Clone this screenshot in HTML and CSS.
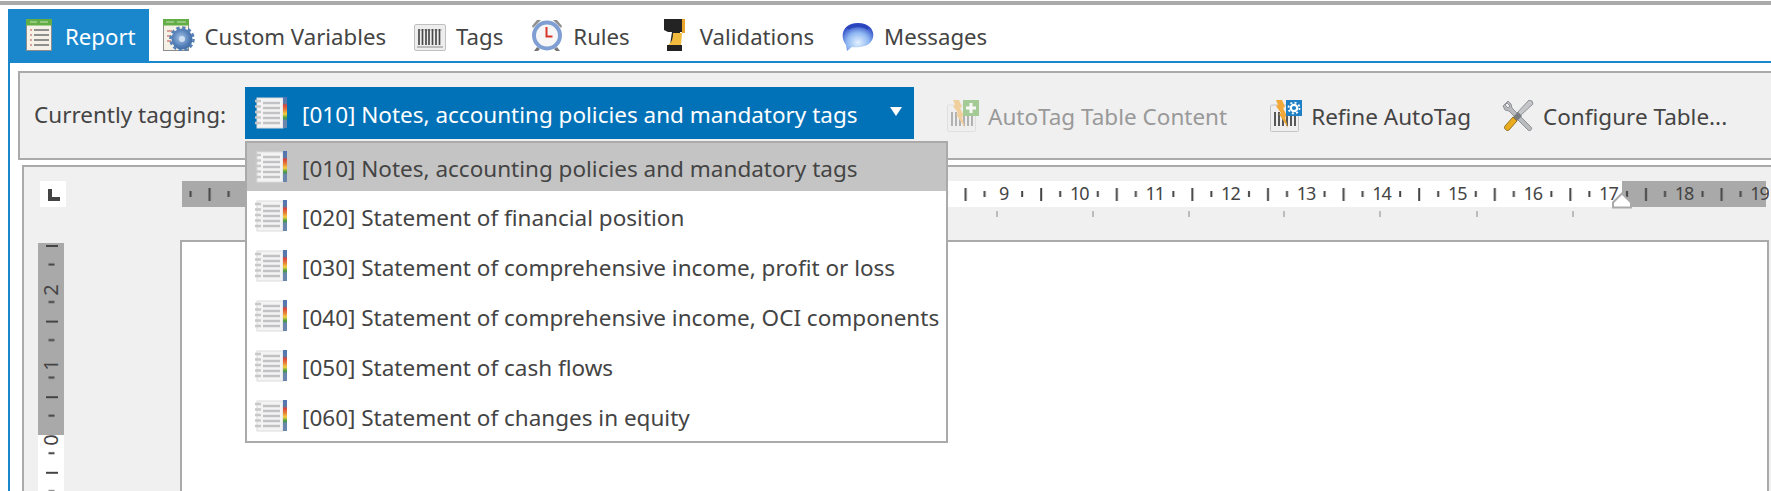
FILE: index.html
```html
<!DOCTYPE html>
<html lang="en">
<head>
<meta charset="utf-8">
<title>Report</title>
<link rel="stylesheet" href="styles.css">
</head>
<body>
<svg class="defs" width="0" height="0" aria-hidden="true">
  <defs>
    <radialGradient id="gearFill" cx="45%" cy="45%" r="60%">
      <stop offset="0" stop-color="#a9c4e6"/><stop offset=".6" stop-color="#5b86bd"/><stop offset="1" stop-color="#3a659c"/>
    </radialGradient>
    <radialGradient id="bubbleFill" cx="50%" cy="70%" r="65%">
      <stop offset="0" stop-color="#e4f1ff"/><stop offset=".55" stop-color="#8fb8f2"/><stop offset="1" stop-color="#2c48c4"/>
    </radialGradient>
    <linearGradient id="stripFill" x1="0" y1="0" x2="0" y2="1">
      <stop offset="0" stop-color="#4f76b4"/><stop offset=".2" stop-color="#5a79a8"/><stop offset=".27" stop-color="#d8443a"/><stop offset=".42" stop-color="#e8803a"/><stop offset=".55" stop-color="#f2cf3f"/><stop offset=".68" stop-color="#3f9a3f"/><stop offset=".76" stop-color="#6b86ad"/><stop offset="1" stop-color="#6b86ad"/>
    </linearGradient>
    <symbol id="i-notes" viewBox="0 0 32 32">
      <rect x="2" y="1" width="26" height="30" fill="#f4f4f4" stroke="#dcdcde"/>
      <path d="M8 6h17M8 11h17M8 16h17M8 21h17M8 26h17" stroke="#c2c2c4" stroke-width="2.400"/>
      <path d="M0 4h6M0 9.500h6M0 15h6M0 20.500h6M0 26h6" stroke="#c8c8c8" stroke-width="2.400"/>
      <rect x="28" y="0" width="4" height="31" fill="url(#stripFill)"/>
    </symbol>
    <symbol id="i-table" viewBox="0 0 32 32">
      <rect x="3.500" y="5" width="25" height="26.500" fill="#f6f1e7" stroke="#8d8d8d"/>
      <rect x="3" y="0" width="26" height="6.500" fill="#62ad45"/>
      <path d="M7 3h7M17 3h8" stroke="#c6e4b5" stroke-width="1.200"/>
      <path d="M11 11h15M11 16h15M11 21h15M11 26h15" stroke="#8f8f8f" stroke-width="2"/>
      <path d="M7 11h2M7 16h2M7 21h2M7 26h2" stroke="#d9a09a" stroke-width="2"/>
    </symbol>
    <symbol id="i-vars" viewBox="0 0 32 32">
      <rect x=".5" y="5" width="25" height="26.500" fill="#f6f1e7" stroke="#8d8d8d"/>
      <rect x="0" y="0" width="26" height="6.500" fill="#62ad45"/>
      <path d="M3 3h8M14 3h9" stroke="#c6e4b5" stroke-width="1.200"/>
      <path d="M4 12h5M4 17h4M4 22h4" stroke="#d9a09a" stroke-width="2"/>
      <circle cx="19" cy="20" r="10.500" fill="url(#gearFill)"/>
      <circle cx="19" cy="20" r="11.500" fill="none" stroke="#5580b5" stroke-width="2.500" stroke-dasharray="3.400 2.600"/>
      <circle cx="19" cy="20" r="3" fill="#cfe0f3"/>
    </symbol>
    <symbol id="i-tags" viewBox="0 0 32 32">
      <rect x=".5" y="5.500" width="31" height="26" rx="1.500" fill="#eeeeee" stroke="#c0c0c0"/>
      <path d="M4 10h24v2H4z" fill="#cfcfcf"/>
      <path d="M5 10v16M8.500 10v16M12 10v16M15 10v16M18.500 10v16M22 10v16M25.500 10v16" stroke="#4a4a4a" stroke-width="1.700"/>
      <path d="M3 28h26" stroke="#bbbbbb" stroke-width="2"/>
    </symbol>
    <symbol id="i-clock" viewBox="0 0 32 32">
      <path d="M1 7 6 1h4L2 9zM31 7l-5-6h-4l8 8z" fill="#8f8f8f"/>
      <path d="M3 32l3-4 3 2-2 2zM29 32l-3-4-3 2 2 2z" fill="#777777"/>
      <circle cx="16" cy="16.500" r="13" fill="#f6f6f6" stroke="#7f9fd4" stroke-width="4"/>
      <path d="M15.500 8v9.500h6" fill="none" stroke="#d8362c" stroke-width="2"/>
    </symbol>
    <symbol id="i-scanner" viewBox="0 0 32 32">
      <path d="M6 0h18v13H22v5l-1 8H12l2-13H10L6 11z" fill="#232323"/>
      <path d="M24 0h3v14h-3z" fill="#e9a42d"/>
      <path d="M15 14h9l-1 12H10c3-2 5-5 5-12z" fill="#f1bc3d"/>
      <path d="M9 26h15v6H9z" fill="#222222"/>
    </symbol>
    <symbol id="i-bubble" viewBox="0 0 32 32">
      <path d="M4 26 C-3 17 1 4 16 4 C31 4 35 17 28 24 C24 28 15 29 10 28 L5 32 Z" fill="url(#bubbleFill)"/>
      <path d="M6 10c4-4 16-4 20 0" fill="none" stroke="#1f37b0" stroke-width="2.500" opacity=".6"/>
    </symbol>
    <symbol id="i-autotag" viewBox="0 0 32 32">
      <rect x=".5" y="5" width="28" height="26.500" rx="1" fill="#efefef" stroke="#d0d0d0"/>
      <path d="M5 12v14M9 12v14M13 12v14M17 12v14M21 12v14M25 12v14" stroke="#555555" stroke-width="1.600"/>
      <path d="M6 0h6l3 7-2 1 4 8-2 1 3 11-9-14 2-1-5-7 2-1z" fill="#f2b04a"/>
      <rect x="16" y="0" width="16" height="16" fill="#5aa63c"/>
      <path d="M24 3v10M19 8h10" stroke="#ffffff" stroke-width="3"/>
    </symbol>
    <symbol id="i-refine" viewBox="0 0 32 32">
      <rect x=".5" y="5" width="28" height="26.500" rx="1" fill="#efefef" stroke="#c4c4c4"/>
      <path d="M5 12v14M9 12v14M13 12v14M17 12v14M21 12v14M25 12v14" stroke="#333333" stroke-width="1.600"/>
      <path d="M6 0h6l3 7-2 1 4 8-2 1 3 11-9-14 2-1-5-7 2-1z" fill="#f0a838"/>
      <rect x="16" y="0" width="16" height="16" fill="#1e7fc4"/>
      <circle cx="24" cy="8" r="3.200" fill="none" stroke="#ffffff" stroke-width="2.200"/>
      <circle cx="24" cy="8" r="5.500" fill="none" stroke="#ffffff" stroke-width="1.800" stroke-dasharray="2 2.300"/>
    </symbol>
    <symbol id="i-config" viewBox="0 0 32 32">
      <path d="M6 1 1 6l2 4 4 1 19 19c2 2 5-1 3-3L10 8 9 4zM5 3l3 3-2 2-3-3z" fill="#b9bcbf" stroke="#7d8084" stroke-width=".8"/>
      <path d="M30 1 27 0 15 13l3 3L31 4z" fill="#c4c6c9" stroke="#7d8084" stroke-width=".8"/>
      <path d="M16 12l4 4-5 5-4-4z" fill="#777a7e"/>
      <path d="M11 17l4 4-8 9c-2 2-6-2-4-4z" fill="#e9ac1f" stroke="#7a5a10" stroke-width=".8"/>
    </symbol>
  </defs>
</svg>

<div class="topbar"></div>

<nav class="tabs">
  <div class="tab tab-active"><svg class="icon"><use href="#i-table"/></svg><span>Report</span></div>
  <div class="tab"><svg class="icon"><use href="#i-vars"/></svg><span>Custom Variables</span></div>
  <div class="tab"><svg class="icon"><use href="#i-tags"/></svg><span>Tags</span></div>
  <div class="tab"><svg class="icon"><use href="#i-clock"/></svg><span>Rules</span></div>
  <div class="tab"><svg class="icon"><use href="#i-scanner"/></svg><span>Validations</span></div>
  <div class="tab"><svg class="icon"><use href="#i-bubble"/></svg><span>Messages</span></div>
</nav>

<main class="content">
  <section class="toolbar">
    <span class="label">Currently tagging:</span>
    <div class="combo">
      <div class="combo-value">
        <svg class="icon"><use href="#i-notes"/></svg>
        <span class="combo-text">[010] Notes, accounting policies and mandatory tags</span>
        <span class="caret"></span>
      </div>
      <ul class="list">
        <li class="row row-selected"><svg class="icon"><use href="#i-notes"/></svg><span>[010] Notes, accounting policies and mandatory tags</span></li>
        <li class="row"><svg class="icon"><use href="#i-notes"/></svg><span>[020] Statement of financial position</span></li>
        <li class="row"><svg class="icon"><use href="#i-notes"/></svg><span>[030] Statement of comprehensive income, profit or loss</span></li>
        <li class="row"><svg class="icon"><use href="#i-notes"/></svg><span>[040] Statement of comprehensive income, OCI components</span></li>
        <li class="row"><svg class="icon"><use href="#i-notes"/></svg><span>[050] Statement of cash flows</span></li>
        <li class="row"><svg class="icon"><use href="#i-notes"/></svg><span>[060] Statement of changes in equity</span></li>
      </ul>
    </div>
    <div class="tool tool-disabled"><svg class="icon icon-dim"><use href="#i-autotag"/></svg><span>AutoTag Table Content</span></div>
    <div class="tool tool-refine"><svg class="icon"><use href="#i-refine"/></svg><span>Refine AutoTag</span></div>
    <div class="tool tool-config"><svg class="icon"><use href="#i-config"/></svg><span>Configure Table...</span></div>
  </section>

  <section class="editor">
    <div class="ruler-row">
      <div class="corner"><span class="corner-mark"></span></div>
      <svg class="hruler" width="1587" height="36" viewBox="0 0 1587 36">
        <defs>
          <pattern id="hticks" x="65.200" y="0" width="75.600" height="26" patternUnits="userSpaceOnUse">
            <rect x="18" y="10" width="2" height="6" fill="#444"/>
            <rect x="37" y="7" width="2" height="13" fill="#444"/>
            <rect x="56" y="10" width="2" height="6" fill="#444"/>
          </pattern>
        </defs>
        <rect x="0" y="0" width="1584" height="26" fill="#fff"/>
        <rect x="0" y="0" width="141" height="26" fill="#a9a9a9"/>
        <rect x="1440" y="0" width="144" height="26" fill="#a9a9a9"/>
        <rect x="0" y="0" width="1584" height="26" fill="url(#hticks)"/>
        <g class="hnums">
          <text x="821.600" y="19">9</text>
          <text x="897.200" y="19">10</text>
          <text x="972.800" y="19">11</text>
          <text x="1048.400" y="19">12</text>
          <text x="1124" y="19">13</text>
          <text x="1199.600" y="19">14</text>
          <text x="1275.200" y="19">15</text>
          <text x="1350.800" y="19">16</text>
          <text x="1426.400" y="19">17</text>
          <text x="1502" y="19">18</text>
          <text x="1577.600" y="19">19</text>
        </g>
        <path d="M815 30v6M911 30v6M1007 30v6M1102 30v6M1198 30v6M1295 30v6M1391 30v6" stroke="#aaa" stroke-width="1.500"/>
        <path d="M1431 26.500v-5l9-9 9 9v5z" fill="#fff" stroke="#aaa" stroke-width="2"/>
      </svg>
    </div>
    <div class="work-row">
      <svg class="vruler" width="26" height="248" viewBox="0 0 26 248">
        <defs>
          <pattern id="vticks" x="0" y="2" width="26" height="75.600" patternUnits="userSpaceOnUse">
            <rect x="8" y="0" width="12" height="2" fill="#444"/>
            <rect x="10.500" y="18.500" width="6" height="2" fill="#444"/>
            <rect x="10.500" y="56" width="6" height="2" fill="#444"/>
          </pattern>
        </defs>
        <rect x="0" y="0" width="26" height="248" fill="#fff"/>
        <rect x="0" y="0" width="26" height="192" fill="#a9a9a9"/>
        <rect x="0" y="0" width="26" height="248" fill="url(#vticks)"/>
        <g class="vnums">
          <text transform="translate(20 47) rotate(-90)">2</text>
          <text transform="translate(20 122) rotate(-90)">1</text>
          <text transform="translate(20 197) rotate(-90)">0</text>
        </g>
      </svg>
      <div class="page"></div>
    </div>
  </section>
</main>
</body>
</html>
```
FILE: styles.css
```css
* { box-sizing: border-box; }
html, body { margin: 0; padding: 0; }
body {
  width: 1771px;
  height: 491px;
  overflow: hidden;
  background: #fff;
  font-family: "Noto Sans", "Open Sans", sans-serif;
  font-size: 22.500px;
  color: #444;
}
.defs { display: block; height: 0; }
.topbar { height: 4px; margin-top: 1px; background: #aaa; }

.icon { width: 32px; height: 32px; flex: none; display: block; filter: blur(.6px); }
.icon-dim { opacity: .5; }

.tabs { display: flex; height: 52px; margin: 4px 0 0 8px; font-size: 22.200px; }
.tab {
  display: flex;
  align-items: flex-start;
  gap: 10px;
  padding: 10px 14px 0;
  line-height: 36px;
  white-space: nowrap;
}
.tab-active { background: #1a87cd; color: #fff; padding-left: 15px; padding-right: 13px; }

.content {
  border-top: 2px solid #1a87cd;
  border-left: 2px solid #1a87cd;
  margin-left: 8px;
  padding: 8px 0 0 8px;
  height: 430px;
}

.toolbar {
  display: flex;
  align-items: flex-start;
  height: 89px;
  padding: 14px 0 0 14px;
  border: 2px solid #aaa;
  border-right: none;
  background: #f0f0f0;
}
.label { width: 211px; flex: none; line-height: 56px; white-space: nowrap; }

.combo { position: relative; width: 669px; flex: none; }
.combo-value {
  display: flex;
  align-items: center;
  gap: 15px;
  height: 52px;
  padding: 0 12px 0 10px;
  background: #0272b8;
  color: #fff;
  white-space: nowrap;
}
.combo-text { flex: 1; position: relative; top: 1px; }
.caret {
  width: 0;
  height: 0;
  margin-bottom: 4px;
  border-left: 6.500px solid transparent;
  border-right: 6.500px solid transparent;
  border-top: 9px solid #fff;
}

.list {
  position: absolute;
  top: 54px;
  left: 0;
  z-index: 5;
  width: 703px;
  margin: 0;
  padding: 0;
  list-style: none;
  background: #fff;
  border: 2px solid #aaa;
}
.row {
  display: flex;
  align-items: center;
  gap: 15px;
  height: 50px;
  padding: 0 0 0 8px;
  white-space: nowrap;
  line-height: 50px;
}
.row:first-child { height: 48px; }
.row-selected { background: #c4c4c4; }
.row span { position: relative; top: 2px; }

.tool {
  display: flex;
  align-items: center;
  gap: 9px;
  height: 32px;
  margin-top: 13px;
  white-space: nowrap;
  line-height: 36px;
}
.tool span { position: relative; top: 1px; }
.tool-disabled { color: #999; margin-left: 33px; }
.tool-refine { margin-left: 43px; }
.tool-config { margin-left: 31px; }

.editor {
  margin: 5px 0 0 4px;
  height: 326px;
  overflow: hidden;
  padding: 14px 0 0 16px;
  border: 2px solid #aaa;
  border-right: none;
  border-bottom: none;
  background: #f0f0f0;
}
.ruler-row { display: flex; align-items: flex-start; }
.corner {
  width: 26px;
  height: 26px;
  flex: none;
  padding: 8px 0 0 8px;
  background: #fff;
}
.corner-mark {
  display: block;
  width: 12px;
  height: 12px;
  border-left: 4px solid #444;
  border-bottom: 4px solid #444;
}
.hruler { margin-left: 116px; flex: none; display: block; }
.hnums text {
  font-family: "Noto Sans", sans-serif;
  font-size: 18px;
  letter-spacing: -1px;
  fill: #444;
  text-anchor: middle;
}

.work-row { display: flex; align-items: flex-start; margin-top: 23px; margin-left: -2px; }
.vruler { flex: none; margin-top: 3px; display: block; }
.vnums text {
  font-family: "Noto Sans", sans-serif;
  font-size: 20px;
  fill: #444;
  text-anchor: middle;
}
.page {
  width: 1589px;
  height: 251px;
  margin-left: 116px;
  flex: none;
  background: #fff;
  border: 2px solid #aaa;
  border-bottom: none;
}
```
